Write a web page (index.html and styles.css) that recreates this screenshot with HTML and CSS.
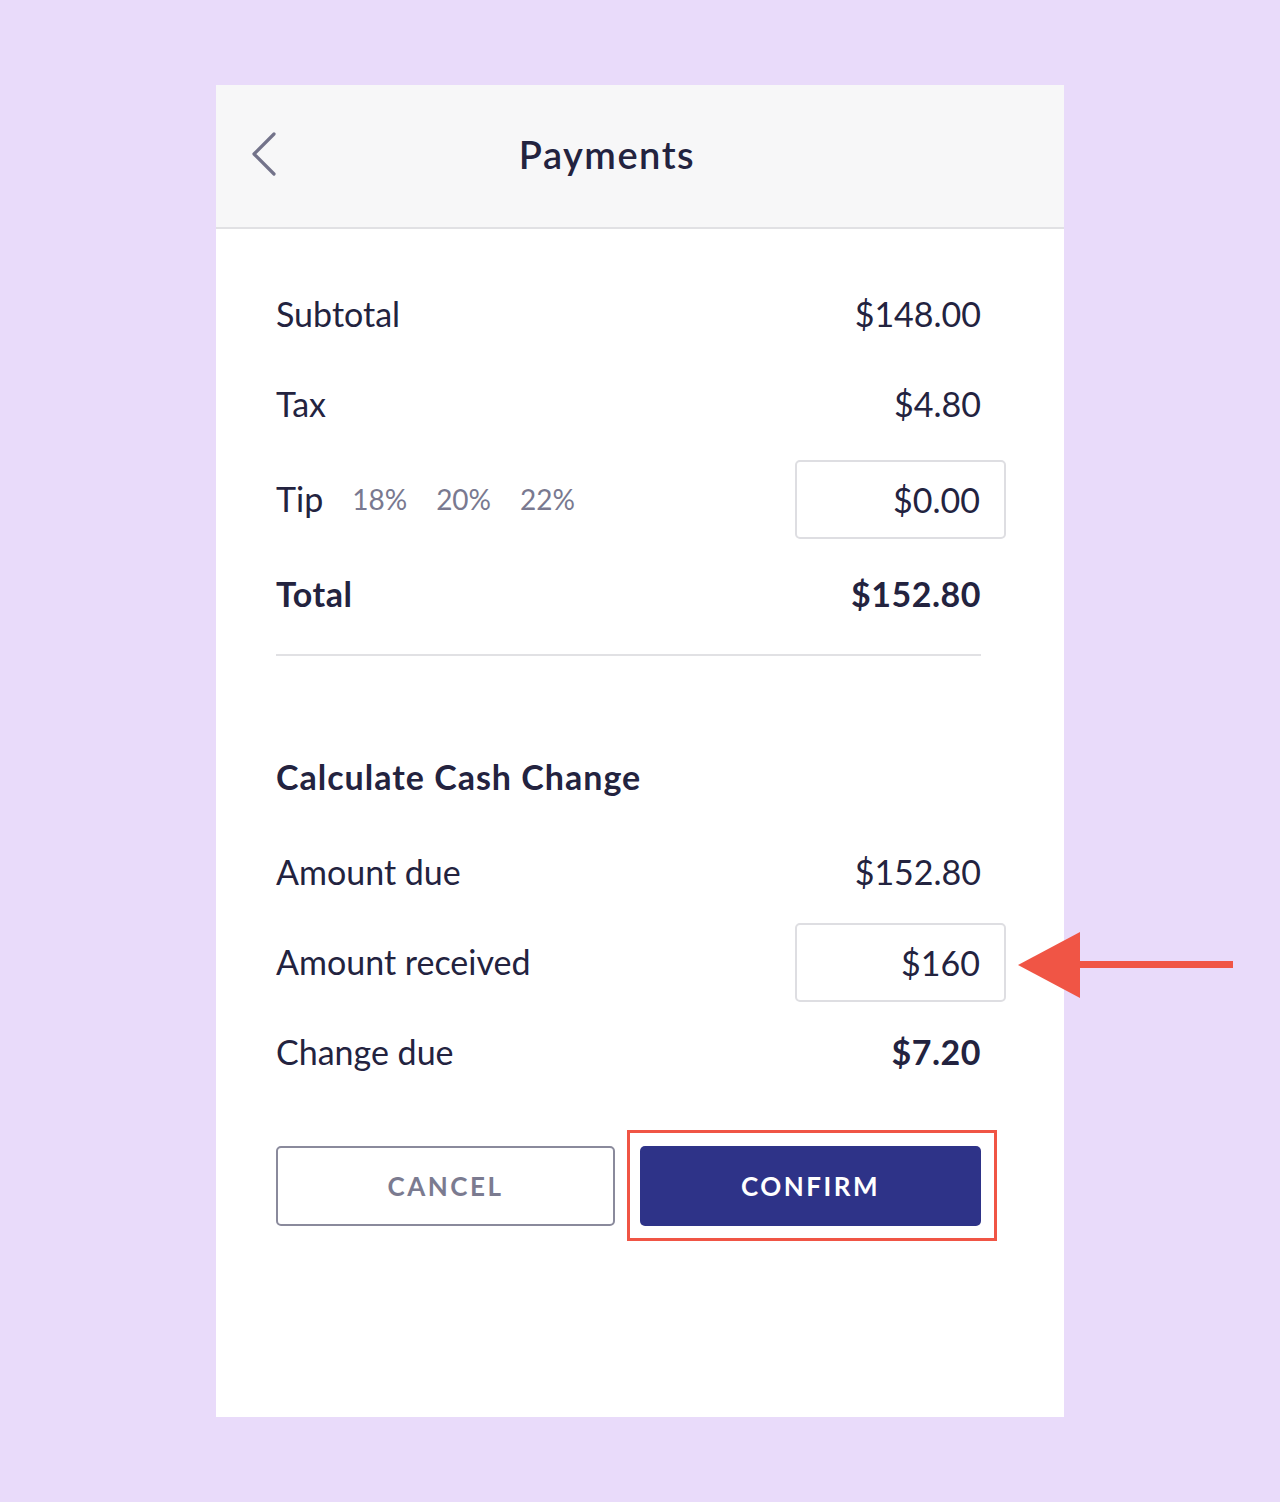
FILE: index.html
```html
<!DOCTYPE html>
<html>
<head>
<meta charset="utf-8">
<link rel="stylesheet" href="styles.css">
</head>
<body>
<div class="stage">
  <div class="card">
    <header class="header">
      <svg class="back" width="28" height="44" viewBox="0 0 28 44"><path d="M24 2 L4 22 L24 42" fill="none" stroke="#73738a" stroke-width="3.2" stroke-linecap="round" stroke-linejoin="round"/></svg>
      <h1 class="title">Payments</h1>
    </header>
    <main class="content">
      <div class="row"><span class="label">Subtotal</span><span class="value">$148.00</span></div>
      <div class="row"><span class="label">Tax</span><span class="value">$4.80</span></div>
      <div class="row row-tip">
        <div class="tip-left"><span class="label">Tip</span><span class="pct">18%</span><span class="pct">20%</span><span class="pct">22%</span></div>
        <div class="field">$0.00</div>
      </div>
      <div class="row"><span class="label bold">Total</span><span class="value bold">$152.80</span></div>
      <div class="divider"></div>
      <h2 class="section-title">Calculate Cash Change</h2>
      <div class="row"><span class="label">Amount due</span><span class="value">$152.80</span></div>
      <div class="row"><span class="label">Amount received</span>
        <div class="field field-annot">$160
          <svg class="arrow" width="216" height="66" viewBox="0 0 216 66"><polygon points="0,33 62,0 62,66" fill="#f05545"/><rect x="60" y="29" width="155" height="7" fill="#f05545"/></svg>
        </div>
      </div>
      <div class="row"><span class="label">Change due</span><span class="value bold">$7.20</span></div>
      <div class="actions">
        <button class="btn btn-cancel">CANCEL</button>
        <div class="confirm-wrap">
          <button class="btn btn-confirm">CONFIRM</button>
          <div class="highlight"></div>
        </div>
      </div>
    </main>
  </div>
</div>
</body>
</html>
```
FILE: styles.css
```css
* { box-sizing: border-box; }
html, body { margin: 0; padding: 0; }
body {
  background: #e9dbfa;
  font-family: "Lato", "Noto Sans", sans-serif;
  color: #23233f;
  width: 1280px;
  height: 1502px;
}
.stage {
  padding-top: 85px;
  padding-left: 216px;
}
.card {
  width: 848px;
  height: 1332px;
  background: #ffffff;
}
.header {
  height: 144px;
  background: #f7f7f8;
  border-bottom: 2px solid #e1e1e4;
  position: relative;
  display: flex;
  align-items: center;
  justify-content: center;
  padding-right: 66px;
}
.back {
  position: absolute;
  left: 34px;
  top: 47px;
}
.title {
  margin: 0;
  font-size: 38px;
  font-weight: 600;
  letter-spacing: 1.5px;
  color: #23233f;
  margin-bottom: 4px;
}
.content {
  padding: 40px 83px 0 60px;
}
.row {
  height: 90px;
  display: flex;
  align-items: center;
  justify-content: space-between;
  font-size: 34px;
}
.row-tip { height: 100px; }
.label, .value { line-height: 1; }
.bold { font-weight: 700; letter-spacing: 0.5px; }
.tip-left { display: flex; align-items: center; }
.pct {
  font-size: 28px;
  color: #797990;
  margin-left: 29px;
}
.pct:first-of-type { margin-left: 36px; }
.field {
  width: 211px;
  height: 79px;
  margin-right: -25px;
  border: 2px solid #dedee2;
  border-radius: 5px;
  display: flex;
  align-items: center;
  justify-content: flex-end;
  padding-right: 24px;
  position: relative;
}
.divider {
  margin-top: 15px;
  height: 2px;
  background: #e1e1e4;
}
.section-title {
  margin: 90px 0 21px;
  height: 60px;
  display: flex;
  align-items: center;
  font-size: 34px;
  font-weight: 700;
  letter-spacing: 1px;
}
.arrow {
  position: absolute;
  left: 221px;
  top: 7px;
}
.actions {
  margin-top: 49px;
  display: flex;
  gap: 25px;
}
.btn {
  height: 80px;
  border-radius: 5px;
  font-family: "Lato", "Noto Sans", sans-serif;
  font-size: 26px;
  font-weight: 700;
  letter-spacing: 2.5px;
}
.btn-cancel {
  width: 339px;
  background: #ffffff;
  border: 2px solid #8a8a9c;
  color: #7b7b90;
}
.confirm-wrap {
  position: relative;
  width: 341px;
}
.btn-confirm {
  width: 341px;
  background: #2e3388;
  border: none;
  color: #ffffff;
}
.highlight {
  position: absolute;
  left: -13px;
  right: -16px;
  top: -16px;
  bottom: -15px;
  border: 3px solid #f05545;
}
```
